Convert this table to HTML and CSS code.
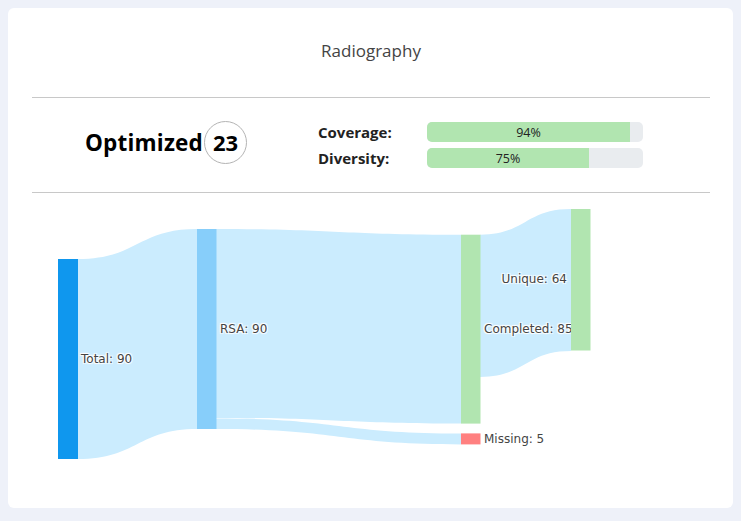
FILE: index.html
```html
<!DOCTYPE html>
<html>
<head>
<meta charset="utf-8">
<link rel="stylesheet" href="styles.css">
</head>
<body>
<div class="card">
  <div class="header">
    <h2 class="title">Radiography</h2>
  </div>
  <div class="stats">
    <div class="opt">
      <span class="opt-label">Optimized</span>
      <span class="opt-count">23</span>
    </div>
    <div class="metrics">
      <div class="metric">
        <span class="metric-label">Coverage:</span>
        <div class="bar"><div class="fill" style="width:94%">94%</div></div>
      </div>
      <div class="metric">
        <span class="metric-label">Diversity:</span>
        <div class="bar"><div class="fill" style="width:75%">75%</div></div>
      </div>
    </div>
  </div>
  <div class="chart">
    <svg class="sankey" width="678" height="300" viewBox="32 193 678 300">
      <g class="links">
        <path d="M78,259 C137.5,259 137.5,229 197,229 L197,429 C137.5,429 137.5,459 78,459 Z"/>
        <path d="M216,229 C338.5,229 338.5,234.7 461,234.7 L461,423.6 C338.5,423.6 338.5,417.9 216,417.9 Z"/>
        <path d="M216,418.4 C338.5,418.4 338.5,433.5 461,433.5 L461,444.4 C338.5,444.4 338.5,429 216,429 Z"/>
        <path d="M480,234.7 C525.5,234.7 525.5,209 571,209 L571,351 C525.5,351 525.5,376.9 480,376.9 Z"/>
      </g>
      <rect class="n-total" x="58" y="259" width="20" height="200"/>
      <rect class="n-rsa" x="197" y="229" width="19.5" height="200"/>
      <rect class="n-green" x="461" y="234.7" width="19.5" height="188.9"/>
      <rect class="n-missing" x="461" y="433.4" width="19.5" height="11"/>
      <text class="lbl" x="81" y="363">Total: 90</text>
      <text class="lbl" x="220" y="333">RSA: 90</text>
      <text class="lbl" x="484" y="333">Completed: 85</text>
      <text class="lbl" x="484" y="443">Missing: 5</text>
      <rect class="n-green" x="571" y="209" width="19.5" height="141.5"/>
      <text class="lbl" x="567" y="283" text-anchor="end">Unique: 64</text>
    </svg>
  </div>
</div>
</body>
</html>
```

FILE: styles.css
```css
html, body {
  margin: 0;
  padding: 0;
}
body {
  background: #eef1f9;
  padding: 8px;
  font-family: "Open Sans", "Liberation Sans", sans-serif;
}
.card {
  background: #ffffff;
  border-radius: 6px;
  height: 500px;
  padding: 0 23px 0 24px;
  box-sizing: border-box;
}
.header {
  height: 89px;
  display: flex;
  align-items: center;
  justify-content: center;
  border-bottom: 1px solid #c8c8c8;
}
.title {
  margin: 0;
  padding-bottom: 5px;
  font-size: 17px;
  font-weight: 400;
  color: #444;
}
.stats {
  height: 94px;
  display: flex;
  align-items: center;
  border-bottom: 1px solid #c8c8c8;
}
.opt {
  width: 268px;
  display: flex;
  align-items: center;
  justify-content: center;
  padding-bottom: 6px;
}
.opt-label {
  font-size: 22.5px;
  font-weight: 700;
  letter-spacing: 0.2px;
  color: #000;
}
.opt-count {
  width: 41px;
  height: 41px;
  border: 1px solid #b4b4b4;
  border-radius: 50%;
  display: flex;
  align-items: center;
  justify-content: center;
  font-size: 22px;
  font-weight: 700;
  color: #000;
  margin-left: 1px;
}
.metrics {
  display: flex;
  flex-direction: column;
  gap: 6px;
  padding-left: 18px;
}
.metric {
  display: flex;
  align-items: center;
}
.metric-label {
  width: 109px;
  font-size: 15px;
  font-weight: 700;
  color: #222;
}
.bar {
  width: 216px;
  height: 20px;
  border-radius: 5px;
  background: #e9ecef;
  overflow: hidden;
  display: flex;
}
.fill {
  background: #b1e5b0;
  height: 100%;
  display: flex;
  align-items: center;
  justify-content: center;
  font-size: 12.5px;
  color: #222;
}
.chart {
  display: block;
}
.sankey {
  display: block;
}
.links path {
  fill: #cbecfe;
}
.n-total { fill: #0f97ee; }
.n-rsa { fill: #87cefa; }
.n-green { fill: #b1e5b0; }
.n-missing { fill: #ff8080; }
.lbl {
  font-family: "DejaVu Sans", sans-serif;
  font-size: 12px;
  fill: #444;
  text-shadow: 1px 1px 1px #fff, 1px -1px 1px #fff, -1px 1px 1px #fff, -1px -1px 1px #fff;
}
```
